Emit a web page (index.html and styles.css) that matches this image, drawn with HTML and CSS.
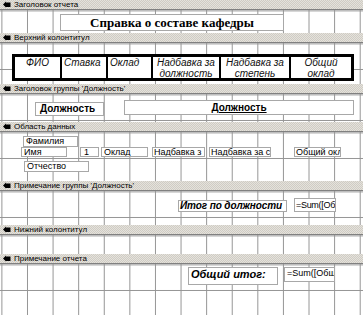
FILE: index.html
```html
<!DOCTYPE html>
<html lang="ru">
<head>
    <meta charset="UTF-8">
    <title>Отчет - конструктор</title>
    <link rel="stylesheet" href="styles.css">
</head>
<body>
    <div class="report">
        <div class="band"><svg class="hand" width="8" height="7" viewBox="0 0 8 7"><path d="M0 3.5 L3 0.5 L3 1.5 L7.5 1.5 L7.5 6 L3 6 L3 6.5 Z" fill="#000"/></svg>Заголовок отчета</div>
        <div class="sec sec-title">
            <div class="ctl title">Справка о составе кафедры</div>
        </div>

        <div class="band"><svg class="hand" width="8" height="7" viewBox="0 0 8 7"><path d="M0 3.5 L3 0.5 L3 1.5 L7.5 1.5 L7.5 6 L3 6 L3 6.5 Z" fill="#000"/></svg>Верхний колонтитул</div>
        <div class="sec sec-page">
            <div class="headrow">
                <div class="hcell c-fio">ФИО</div>
                <div class="hcell c-rate left">Ставка</div>
                <div class="hcell c-salary left">Оклад</div>
                <div class="hcell c-bonus1">Надбавка за<br>должность</div>
                <div class="hcell c-bonus2">Надбавка за<br>степень</div>
                <div class="hcell c-total">Общий<br>оклад</div>
            </div>
        </div>

        <div class="band"><svg class="hand" width="8" height="7" viewBox="0 0 8 7"><path d="M0 3.5 L3 0.5 L3 1.5 L7.5 1.5 L7.5 6 L3 6 L3 6.5 Z" fill="#000"/></svg>Заголовок группы 'Должность'</div>
        <div class="sec sec-group">
            <div class="ctl pos-label">Должность</div>
            <div class="ctl pos-field">Должность</div>
        </div>

        <div class="band"><svg class="hand" width="8" height="7" viewBox="0 0 8 7"><path d="M0 3.5 L3 0.5 L3 1.5 L7.5 1.5 L7.5 6 L3 6 L3 6.5 Z" fill="#000"/></svg>Область данных</div>
        <div class="sec sec-data">
            <div class="row">
                <div class="ctl fld f-last">Фамилия</div>
            </div>
            <div class="row">
                <div class="ctl fld f-first">Имя</div>
                <div class="ctl fld f-rate">1</div>
                <div class="ctl fld f-salary">Оклад</div>
                <div class="ctl fld f-bonus1">Надбавка з</div>
                <div class="ctl fld f-bonus2">Надбавка за с</div>
                <div class="ctl fld f-total">Общий окл</div>
            </div>
            <div class="row row-gap">
                <div class="ctl fld f-middle">Отчество</div>
            </div>
        </div>

        <div class="band"><svg class="hand" width="8" height="7" viewBox="0 0 8 7"><path d="M0 3.5 L3 0.5 L3 1.5 L7.5 1.5 L7.5 6 L3 6 L3 6.5 Z" fill="#000"/></svg>Примечание группы 'Должность'</div>
        <div class="sec sec-gfoot">
            <div class="ctl sum-label">Итог по должности</div>
            <div class="ctl fld sum-field">=Sum([Об</div>
        </div>

        <div class="band"><svg class="hand" width="8" height="7" viewBox="0 0 8 7"><path d="M0 3.5 L3 0.5 L3 1.5 L7.5 1.5 L7.5 6 L3 6 L3 6.5 Z" fill="#000"/></svg>Нижний колонтитул</div>
        <div class="sec sec-pfoot"></div>

        <div class="band"><svg class="hand" width="8" height="7" viewBox="0 0 8 7"><path d="M0 3.5 L3 0.5 L3 1.5 L7.5 1.5 L7.5 6 L3 6 L3 6.5 Z" fill="#000"/></svg>Примечание отчета</div>
        <div class="sec sec-rfoot">
            <div class="ctl total-label">Общий итог:</div>
            <div class="ctl fld total-field">=Sum([Общ</div>
        </div>
    </div>
</body>
</html>
```

FILE: styles.css
```css
body {
    margin: 0;
    background: #fff;
    font-family: "Liberation Sans", Arial, sans-serif;
}
.report {
    width: 363px;
    height: 315px;
    overflow: hidden;
}
.band {
    box-sizing: border-box;
    height: 10px;
    display: flex;
    align-items: center;
    font-size: 8px;
    line-height: 9px;
    color: #000;
    white-space: nowrap;
    background: repeating-conic-gradient(#d0ccc4 0 25%, #e4e2dc 0 50%) 0 0 / 2px 2px;
    border-bottom: 1px solid #808080;
}
.hand {
    margin: 0 3px 0 3px;
    flex: none;
}
.sec {
    box-sizing: border-box;
    background-color: #fff;
    background-image:
        linear-gradient(to right, #949494 1px, transparent 1px),
        linear-gradient(to bottom, #949494 1px, transparent 1px);
    background-size: 25.6px 25.6px;
    background-position: 1.4px 0.4px;
    overflow: hidden;
}
.ctl {
    box-sizing: border-box;
    background: #fff;
    border: 1px solid #a8a8a8;
    white-space: nowrap;
    overflow: hidden;
    color: #000;
}

/* Заголовок отчета */
.sec-title {
    height: 23px;
    padding: 4px 0 0 60px;
}
.title {
    width: 224px;
    height: 17px;
    font-family: "Liberation Serif", "Times New Roman", serif;
    font-weight: bold;
    font-size: 13px;
    line-height: 15px;
    text-align: center;
}

/* Верхний колонтитул */
.sec-page {
    height: 41px;
    padding: 11px 0 0 12px;
}
.headrow {
    box-sizing: border-box;
    display: flex;
    width: 342px;
    height: 27px;
    border: 3px solid #000;
    background: #fff;
}
.hcell {
    box-sizing: border-box;
    font-style: italic;
    font-size: 10px;
    line-height: 10.5px;
    text-align: center;
    padding-top: 1px;
    color: #111;
}
.hcell + .hcell {
    border-left: 2px solid #000;
}
.hcell.left {
    text-align: left;
    padding-left: 2px;
}
.c-fio { width: 45px; }
.c-rate { width: 46px; }
.c-salary { width: 45px; }
.c-bonus1 { width: 68px; }
.c-bonus2 { width: 70px; }
.c-total { width: 62px; }

/* Заголовок группы */
.sec-group {
    height: 28px;
    display: flex;
    align-items: flex-start;
}
.pos-label {
    margin: 8px 0 0 35px;
    width: 69px;
    height: 14px;
    font-weight: bold;
    font-size: 10px;
    line-height: 12px;
    padding-left: 4px;
}
.pos-field {
    margin: 6px 0 0 20px;
    width: 230px;
    height: 15px;
    font-weight: bold;
    font-size: 10px;
    line-height: 13px;
    text-align: center;
    text-decoration: underline;
}

/* Область данных */
.sec-data {
    height: 49px;
    padding-top: 4px;
}
.row {
    display: flex;
}
.row-gap {
    margin-top: 4px;
}
.fld {
    height: 11px;
    font-size: 9px;
    line-height: 9px;
    padding-left: 2px;
}
.f-last { margin-left: 23px; width: 55px; }
.f-first { margin-left: 21px; width: 46px; height: 10px; }
.f-rate { margin-left: 13px; width: 19px; height: 10px; padding-left: 3px; }
.f-salary { margin-left: 2px; width: 47px; height: 10px; }
.f-bonus1 { margin-left: 4px; width: 53px; height: 10px; padding-left: 1px; }
.f-bonus2 { margin-left: 4px; width: 62px; height: 10px; padding-left: 1px; }
.f-total { margin-left: 23px; width: 47px; height: 10px; padding-left: 1px; }
.f-middle { margin-left: 24px; width: 65px; }

/* Примечание группы */
.sec-gfoot {
    height: 34px;
    display: flex;
    align-items: flex-start;
}
.sum-label {
    margin: 9px 0 0 178px;
    width: 109px;
    height: 12px;
    font-weight: bold;
    font-style: italic;
    font-size: 10px;
    line-height: 10px;
    padding-left: 1px;
    letter-spacing: -0.1px;
}
.sum-field {
    margin: 7px 0 0 7px;
    width: 42px;
    height: 14px;
    line-height: 12px;
    padding-left: 1px;
    letter-spacing: -0.3px;
}

/* Нижний колонтитул */
.sec-pfoot {
    height: 19px;
}

/* Примечание отчета */
.sec-rfoot {
    height: 51px;
    display: flex;
    align-items: flex-start;
}
.total-label {
    margin: 3px 0 0 188px;
    width: 90px;
    height: 18px;
    font-weight: bold;
    font-style: italic;
    font-size: 11px;
    line-height: 13px;
    padding-left: 2px;
}
.total-field {
    margin: 3px 0 0 6px;
    width: 51px;
    height: 15px;
    line-height: 11px;
}
```
